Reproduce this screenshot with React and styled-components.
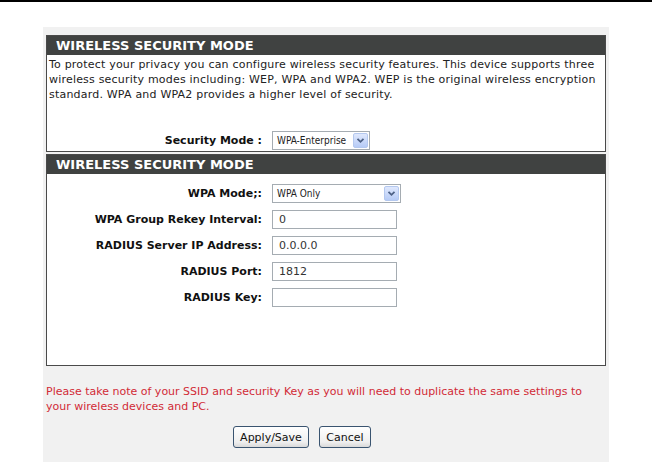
import React from "react";
import styled, { createGlobalStyle } from "styled-components";

const GlobalStyle = createGlobalStyle`
  html, body { margin: 0; padding: 0; background: #ffffff; }
  body {
    font-family: "DejaVu Sans", Tahoma, Verdana, sans-serif;
    font-size: 11px;
    color: #222;
  }
`;

const TopRule = styled.div`
  height: 2px;
  background: #000;
`;

const Page = styled.div`
  margin: 25px 0 0 43px;
  width: 566px;
  min-height: 435px;
  box-sizing: border-box;
  background: #f1f1f1;
  padding: 8px 3px 0 3px;
`;

const Panel = styled.section`
  background: #fff;
  border: 1px solid #4a4a4a;
  margin-bottom: 2px;
`;

const PanelHeader = styled.h2`
  margin: 0;
  height: 19px;
  line-height: 19px;
  padding: 0 9px;
  background: #404241;
  color: #fff;
  font-family: "DejaVu Sans", Tahoma, sans-serif;
  font-weight: bold;
  font-size: 13px;
`;

const Intro = styled.p`
  margin: 0;
  padding: 2px 2px 0 2px;
  line-height: 15px;
  letter-spacing: 0.2px;
  white-space: nowrap;
`;

const Form = styled.div`
  display: grid;
  grid-template-columns: 215px auto;
  column-gap: 10px;
  row-gap: 7px;
  align-items: center;
  padding: ${(p) => p.$pad};
`;

const Label = styled.label`
  text-align: right;
  font-weight: bold;
  font-size: 11px;
  color: #111;
  white-space: nowrap;
`;

const FakeSelect = styled.div`
  display: flex;
  align-items: center;
  justify-content: space-between;
  width: ${(p) => p.$w}px;
  height: 19px;
  box-sizing: border-box;
  border: 1px solid #a5acb2;
  background: #fff;
  padding: 0 1px 0 4px;
  font-size: 10px;
  font-stretch: condensed;
  white-space: nowrap;
  color: #222;
`;

const Arrow = styled.span`
  width: 15px;
  height: 15px;
  flex: none;
  box-sizing: border-box;
  border: 1px solid #b4c8ef;
  border-radius: 2px;
  background: linear-gradient(#dfe8fd, #b6cbf6);
  display: flex;
  align-items: center;
  justify-content: center;
`;

const Field = styled.div`
  width: 125px;
  height: 19px;
  box-sizing: border-box;
  border: 1px solid #a5acb2;
  background: #fff;
  padding: 0 6px;
  font-size: 11px;
  line-height: 17px;
  color: #333;
`;

const Note = styled.p`
  margin: 18px 0 0 0;
  color: #d22b37;
  line-height: 15px;
  white-space: nowrap;
`;

const Actions = styled.div`
  display: flex;
  justify-content: center;
  gap: 10px;
  margin-top: 12px;
  padding-right: 48px;
`;

const Button = styled.button`
  width: ${(p) => p.$w}px;
  height: 22px;
  padding: 0;
  border: 1px solid #3a5470;
  border-radius: 3px;
  background: linear-gradient(#ffffff, #efefef 75%, #d9d9d9);
  font-family: "DejaVu Sans", Tahoma, sans-serif;
  font-size: 11px;
  color: #111;
`;

const Chevron = () => (
  <svg width="9" height="7" viewBox="0 0 9 7">
    <path d="M1.5 1.8 L4.5 4.8 L7.5 1.8" fill="none" stroke="#4d6185" strokeWidth="1.8" />
  </svg>
);

const Select = ({ w, children }) => (
  <FakeSelect $w={w}>
    <span>{children}</span>
    <Arrow>
      <Chevron />
    </Arrow>
  </FakeSelect>
);

export default function App() {
  return (
    <>
      <GlobalStyle />
      <TopRule />
      <Page>
        <Panel>
          <PanelHeader>WIRELESS SECURITY MODE</PanelHeader>
          <Intro>
            To protect your privacy you can configure wireless security features. This device supports three
            <br />
            wireless security modes including: WEP, WPA and WPA2. WEP is the original wireless encryption
            <br />
            standard. WPA and WPA2 provides a higher level of security.
          </Intro>
          <Form $pad="29px 0 1px 0">
            <Label>Security Mode :</Label>
            <Select w={98}>WPA-Enterprise</Select>
          </Form>
        </Panel>
        <Panel>
          <PanelHeader>WIRELESS SECURITY MODE</PanelHeader>
          <Form $pad="10px 0 58px 0">
            <Label>WPA Mode;:</Label>
            <Select w={129}>WPA Only</Select>
            <Label>WPA Group Rekey Interval:</Label>
            <Field>0</Field>
            <Label>RADIUS Server IP Address:</Label>
            <Field>0.0.0.0</Field>
            <Label>RADIUS Port:</Label>
            <Field>1812</Field>
            <Label>RADIUS Key:</Label>
            <Field />
          </Form>
        </Panel>
        <Note>
          Please take note of your SSID and security Key as you will need to duplicate the same settings to
          <br />
          your wireless devices and PC.
        </Note>
        <Actions>
          <Button $w={76}>Apply/Save</Button>
          <Button $w={52}>Cancel</Button>
        </Actions>
      </Page>
    </>
  );
}
